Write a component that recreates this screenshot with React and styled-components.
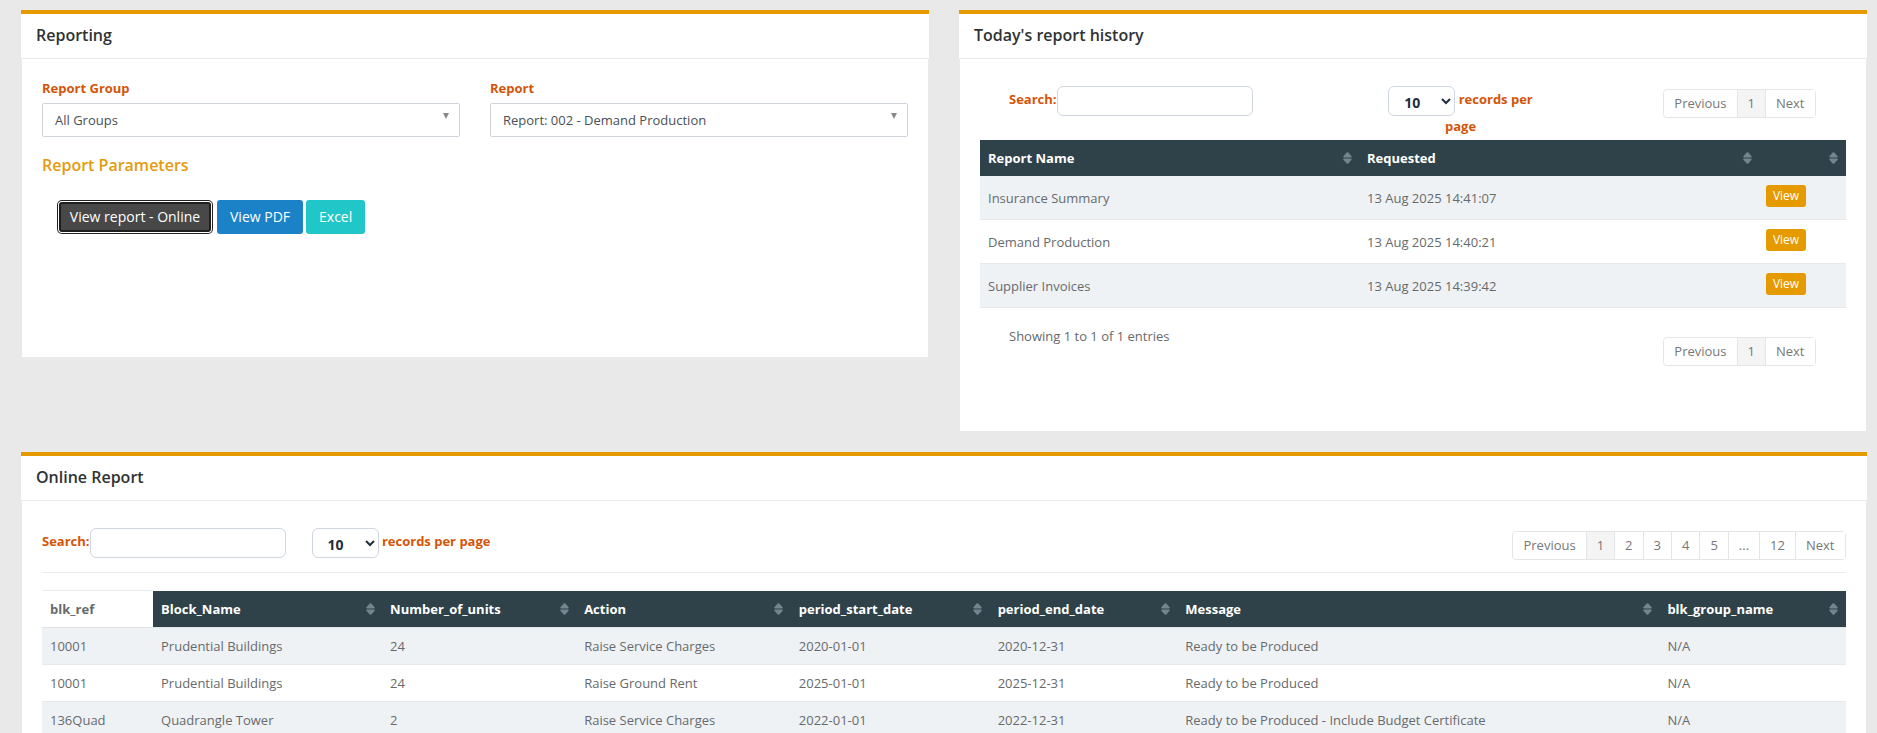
import React from 'react';
import styled, { createGlobalStyle } from 'styled-components';

const GlobalStyle = createGlobalStyle`
  html, body {
    margin: 0;
    height: 733px;
    overflow: hidden;
    background: #e9e9e9;
    font-family: "Open Sans", "Liberation Sans", sans-serif;
    font-size: 13px;
    color: #676a6c;
  }
  * {
    box-sizing: border-box;
  }
`

const Page = styled.div`
  display: flex;
  flex-direction: column;
  gap: 21px;
  padding: 10px 10.5px 0 21px;
`

const TopRow = styled.div`
  display: grid;
  grid-template-columns: 908px 907.5px;
  gap: 30px;
  align-items: start;
`

const Card = styled.section`
  display: flex;
  flex-direction: column;
  border-top: 4px solid #e59a00;
  height: ${props => props.$height || 'auto'};
`

const CardHeader = styled.h2`
  margin: 0;
  height: 45px;
  padding: 0 15px;
  background: #fff;
  border-bottom: 1px solid #e9ecef;
  font-size: 16px;
  font-weight: 600;
  line-height: 42px;
  color: #2f3234;
`

const CardBody = styled.div`
  flex: 1;
  margin: 0 1px;
  background: #fff;
  padding: ${props => props.$padding || '27px 20px 0'};
`

const FieldRow = styled.div`
  display: grid;
  grid-template-columns: 418px 418px;
  gap: 30px;
`

const Field = styled.div`
  display: flex;
  flex-direction: column;
  gap: 5px;
`

const Label = styled.label`
  font-size: 13px;
  font-weight: 700;
  line-height: 20px;
  color: #d4550a;
`

const FakeSelect = styled.div`
  position: relative;
  height: 34px;
  padding: 0 12px;
  border: 1px solid #ced4da;
  border-radius: 2px;
  line-height: 32px;
  color: #495057;
  &::after {
    content: '';
    position: absolute;
    top: 9px;
    right: 10px;
    border-style: solid;
    border-width: 6px 3.5px 0;
    border-color: #888 transparent transparent;
  }
`

const SectionTitle = styled.h3`
  margin: 17px 0 0;
  font-size: 16px;
  font-weight: 600;
  line-height: 22px;
  color: #e59a0c;
`

const ButtonRow = styled.div`
  display: flex;
  align-items: flex-start;
  gap: 3px;
  margin: 24px 0 0 15px;
`

const Button = styled.button`
  height: 34px;
  padding: 0 ${props => props.$pad || '13px'};
  border: 0;
  border-radius: 3px;
  background: ${props => props.$bg};
  color: #fff;
  font-family: inherit;
  font-size: 14px;
  line-height: 34px;
`

const FocusButton = styled(Button)`
  width: 152px;
  height: 30px;
  margin: 2px 3px 0 2px;
  padding: 0;
  background: #484848;
  border: 2px solid #1e1e1e;
  border-radius: 3px;
  line-height: 26px;
  box-shadow: 0 0 0 1px #fff, 0 0 0 2px #222;
`

const HistoryToolbar = styled.div`
  display: flex;
  align-items: flex-start;
  height: 54px;
  padding: 0 30px 0 29px;
`

const SearchBox = styled.div`
  display: flex;
  align-items: center;
  height: 30px;
  font-weight: 700;
  color: #d4550a;
  line-height: 20px;
`

const SearchLabel = styled.span`
  position: relative;
  top: -2px;
`

const SearchInput = styled.input`
  width: 196px;
  height: 30px;
  padding: 0 8px;
  border: 1px solid #cfd6e2;
  border-radius: 6px;
  background: #fff;
`

const PerPageWrap = styled.div`
  width: ${props => props.$width || 'auto'};
  margin-left: ${props => props.$left || '0'};
  text-align: ${props => props.$align || 'left'};
  line-height: 20px;
  font-weight: 700;
  color: #d4550a;
`

const PageSelect = styled.select`
  width: 67px;
  height: 30px;
  padding: 2px 4px 0 11px;
  vertical-align: middle;
  border: 1px solid #cfd6e2;
  border-radius: 6px;
  background: #fff;
  font-family: inherit;
  font-size: 14px;
  font-weight: 700;
  color: #1f2d3d;
`

const Pager = styled.ul`
  display: flex;
  flex: none;
  margin: ${props => props.$margin || '3px 0 0 auto'};
  padding: 0;
  list-style: none;
  height: 29px;
  border: 1px solid #e3e5e8;
  border-radius: 4px;
`

const PagerItem = styled.li`
  padding: 0 10px;
  line-height: 27px;
  color: #777;
  background: ${props => (props.$active ? '#f4f4f4' : '#fff')};
  border-left: ${props => (props.$first ? '0' : '1px solid #e3e5e8')};
  border-radius: ${props => (props.$first ? '4px 0 0 4px' : '0')};
`

const Table = styled.table`
  width: 100%;
  border-collapse: separate;
  border-spacing: 0;
  table-layout: fixed;
`

const HeadCell = styled.th`
  position: relative;
  height: ${props => props.$height};
  padding: 0 8px;
  background: #2f424a;
  border-top: ${props => (props.$line ? '1px solid #fff' : '0')};
  border-bottom: ${props => (props.$line ? '1px solid #e1e4e7' : '0')};
  color: #fff;
  font-size: 13px;
  font-weight: 700;
  text-align: left;
`

const PlainHeadCell = styled.th`
  height: ${props => props.$height};
  padding: 0 8px;
  background: #fff;
  border-top: 1px solid #e9ecef;
  border-bottom: 1px solid #e1e4e7;
  color: #676a6c;
  font-size: 13px;
  font-weight: 700;
  text-align: left;
`

const SortMark = styled.svg`
  position: absolute;
  top: 50%;
  right: 7.5px;
  width: 9px;
  height: 12px;
  margin-top: -6.5px;
`

const Row = styled.tr`
  height: ${props => props.$height};
  background: ${props => (props.$striped ? '#eff2f5' : '#fff')};
`

const Cell = styled.td`
  padding: ${props => props.$top || '0'} 8px 0;
  border-bottom: 1px solid #e6e9ec;
  color: #676a6c;
  white-space: nowrap;
`

const ViewButton = styled.button`
  display: block;
  width: 40px;
  height: 22px;
  margin: 0 0 5px -1px;
  padding: 0;
  border: 0;
  border-radius: 3px;
  background: #e59a00;
  color: #fff;
  font-family: inherit;
  font-size: 12px;
`

const InfoRow = styled.div`
  display: flex;
  align-items: flex-start;
  padding: 18px 30px 0 29px;
`

const Info = styled.div`
  line-height: 20px;
`

const ReportToolbar = styled.div`
  display: flex;
  align-items: flex-start;
  height: 45px;
  margin-bottom: 17px;
  border-bottom: 1px solid #e9ecef;
`

const Sort = () => (
  <SortMark viewBox="0 0 9 12">
    <path
      d="M3.7 .5 Q4.5 -.2 5.3 .5 L8.6 4.3 Q9 5.4 8 5.4 L1 5.4 Q0 5.4 .4 4.3 Z M1 6.6 L8 6.6 Q9 6.6 8.6 7.7 L5.3 11.5 Q4.5 12.2 3.7 11.5 L.4 7.7 Q0 6.6 1 6.6 Z"
      fill="#75858b"
    />
  </SortMark>
)

const history = [
  ['Insurance Summary', '13 Aug 2025 14:41:07'],
  ['Demand Production', '13 Aug 2025 14:40:21'],
  ['Supplier Invoices', '13 Aug 2025 14:39:42'],
]

const reportCols = [111, 229, 194, 214.6, 198.8, 187.6, 482, 186]
const reportHead = ['Block_Name', 'Number_of_units', 'Action', 'period_start_date', 'period_end_date', 'Message', 'blk_group_name']
const reportRows = [
  ['10001', 'Prudential Buildings', '24', 'Raise Service Charges', '2020-01-01', '2020-12-31', 'Ready to be Produced', 'N/A'],
  ['10001', 'Prudential Buildings', '24', 'Raise Ground Rent', '2025-01-01', '2025-12-31', 'Ready to be Produced', 'N/A'],
  ['136Quad', 'Quadrangle Tower', '2', 'Raise Service Charges', '2022-01-01', '2022-12-31', 'Ready to be Produced - Include Budget Certificate', 'N/A'],
]

const PageSize = () => (
  <PageSelect defaultValue="10">
    <option value="10">10</option>
    <option value="25">25</option>
    <option value="50">50</option>
  </PageSelect>
)

const Pagination = ({ pages, margin }) => (
  <Pager $margin={margin}>
    <PagerItem $first>Previous</PagerItem>
    {pages.map((p, i) => (
      <PagerItem key={p} $active={i === 0}>{p}</PagerItem>
    ))}
    <PagerItem>Next</PagerItem>
  </Pager>
)

const App = () => {
  return (
    <Page>
      <GlobalStyle />
      <TopRow>
        <Card $height="347px">
          <CardHeader>Reporting</CardHeader>
          <CardBody $padding="19px 20px 0">
            <FieldRow>
              <Field>
                <Label>Report Group</Label>
                <FakeSelect>All Groups</FakeSelect>
              </Field>
              <Field>
                <Label>Report</Label>
                <FakeSelect>Report: 002 - Demand Production</FakeSelect>
              </Field>
            </FieldRow>
            <SectionTitle>Report Parameters</SectionTitle>
            <ButtonRow>
              <FocusButton>View report - Online</FocusButton>
              <Button $bg="#1b82c8">View PDF</Button>
              <Button $bg="#21c7c8">Excel</Button>
            </ButtonRow>
          </CardBody>
        </Card>
        <Card $height="421px">
          <CardHeader>Today's report history</CardHeader>
          <CardBody>
            <HistoryToolbar>
              <SearchBox>
                <SearchLabel>Search:</SearchLabel>
                <SearchInput />
              </SearchBox>
              <PerPageWrap $width="150px" $left="133px" $align="center">
                <PageSize /> records per page
              </PerPageWrap>
              <Pagination pages={['1']} />
            </HistoryToolbar>
            <Table>
              <colgroup>
                <col width="379" />
                <col width="400" />
                <col width="86.5" />
              </colgroup>
              <thead>
                <tr>
                  <HeadCell $height="36px">Report Name<Sort /></HeadCell>
                  <HeadCell $height="36px">Requested<Sort /></HeadCell>
                  <HeadCell $height="36px"><Sort /></HeadCell>
                </tr>
              </thead>
              <tbody>
                {history.map(([name, when], i) => (
                  <Row key={name} $height="44px" $striped={i % 2 === 0}>
                    <Cell $top="1px">{name}</Cell>
                    <Cell $top="1px">{when}</Cell>
                    <Cell $top="1px"><ViewButton>View</ViewButton></Cell>
                  </Row>
                ))}
              </tbody>
            </Table>
            <InfoRow>
              <Info>Showing 1 to 1 of 1 entries</Info>
              <Pagination pages={['1']} margin="11px 0 0 auto" />
            </InfoRow>
          </CardBody>
        </Card>
      </TopRow>
      <Card>
        <CardHeader>Online Report</CardHeader>
        <CardBody>
          <ReportToolbar>
            <SearchBox>
              <SearchLabel>Search:</SearchLabel>
              <SearchInput />
            </SearchBox>
            <PerPageWrap $left="26px">
              <PageSize /> records per page
            </PerPageWrap>
            <Pagination pages={['1', '2', '3', '4', '5', '...', '12']} />
          </ReportToolbar>
          <Table>
            <colgroup>
              {reportCols.map((w, i) => <col key={i} width={w} />)}
            </colgroup>
            <thead>
              <tr>
                <PlainHeadCell $height="38px">blk_ref</PlainHeadCell>
                {reportHead.map(h => (
                  <HeadCell key={h} $height="38px" $line>{h}<Sort /></HeadCell>
                ))}
              </tr>
            </thead>
            <tbody>
              {reportRows.map((r, i) => (
                <Row key={i} $height="37px" $striped={i % 2 === 0}>
                  {r.map((v, j) => <Cell key={j}>{v}</Cell>)}
                </Row>
              ))}
            </tbody>
          </Table>
        </CardBody>
      </Card>
    </Page>
  )
}

export default App;
